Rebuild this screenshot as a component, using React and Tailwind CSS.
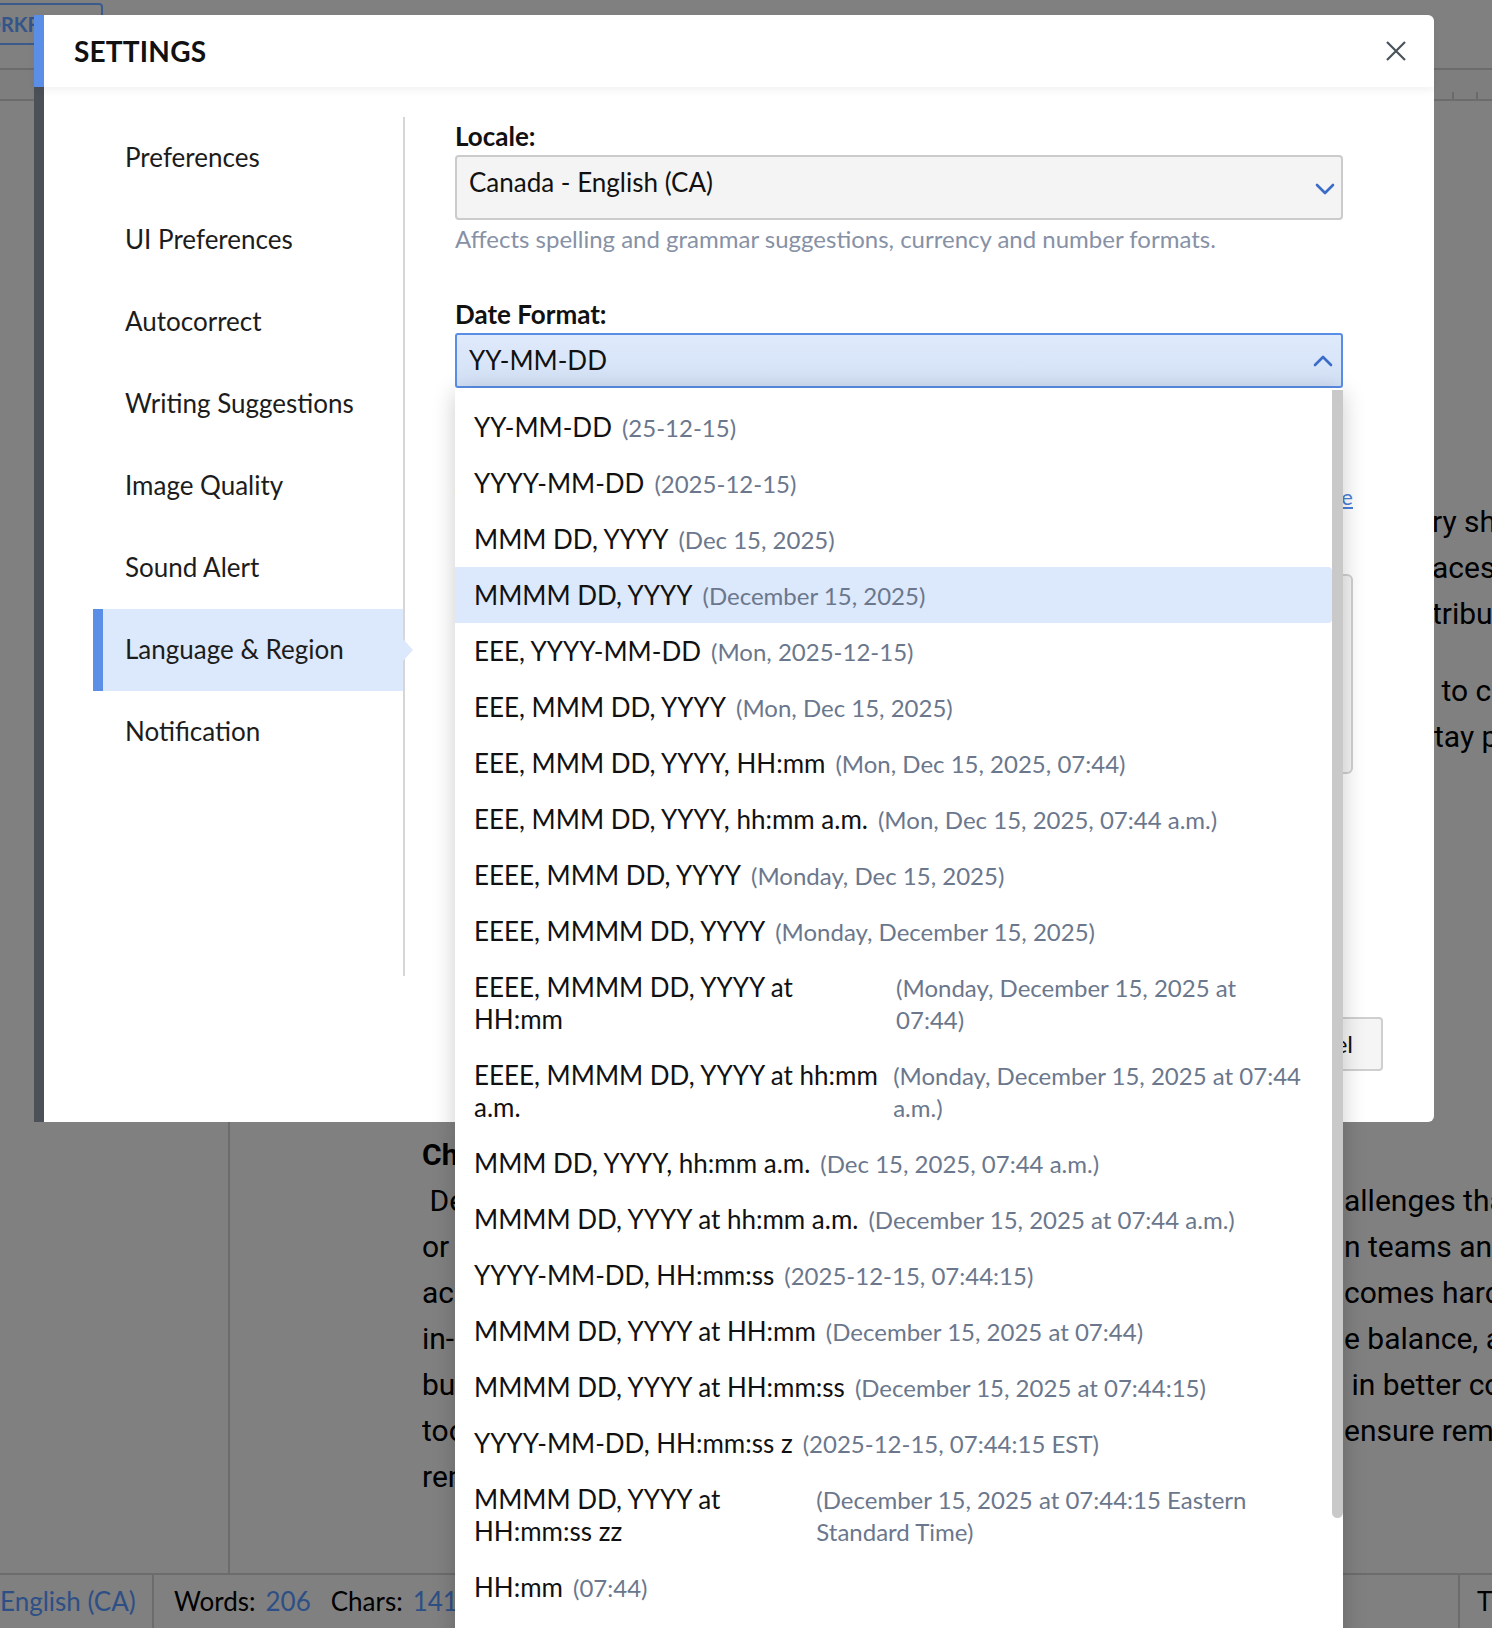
const navItems = [
  "Preferences",
  "UI Preferences",
  "Autocorrect",
  "Writing Suggestions",
  "Image Quality",
  "Sound Alert",
  "Language & Region",
  "Notification",
];

const formats = [
  ["YY-MM-DD", "(25-12-15)"],
  ["YYYY-MM-DD", "(2025-12-15)"],
  ["MMM DD, YYYY", "(Dec 15, 2025)"],
  ["MMMM DD, YYYY", "(December 15, 2025)"],
  ["EEE, YYYY-MM-DD", "(Mon, 2025-12-15)"],
  ["EEE, MMM DD, YYYY", "(Mon, Dec 15, 2025)"],
  ["EEE, MMM DD, YYYY, HH:mm", "(Mon, Dec 15, 2025, 07:44)"],
  ["EEE, MMM DD, YYYY, hh:mm a.m.", "(Mon, Dec 15, 2025, 07:44 a.m.)"],
  ["EEEE, MMM DD, YYYY", "(Monday, Dec 15, 2025)"],
  ["EEEE, MMMM DD, YYYY", "(Monday, December 15, 2025)"],
  ["EEEE, MMMM DD, YYYY at HH:mm", "(Monday, December 15, 2025 at 07:44)"],
  ["EEEE, MMMM DD, YYYY at hh:mm a.m.", "(Monday, December 15, 2025 at 07:44 a.m.)"],
  ["MMM DD, YYYY, hh:mm a.m.", "(Dec 15, 2025, 07:44 a.m.)"],
  ["MMMM DD, YYYY at hh:mm a.m.", "(December 15, 2025 at 07:44 a.m.)"],
  ["YYYY-MM-DD, HH:mm:ss", "(2025-12-15, 07:44:15)"],
  ["MMMM DD, YYYY at HH:mm", "(December 15, 2025 at 07:44)"],
  ["MMMM DD, YYYY at HH:mm:ss", "(December 15, 2025 at 07:44:15)"],
  ["YYYY-MM-DD, HH:mm:ss z", "(2025-12-15, 07:44:15 EST)"],
  ["MMMM DD, YYYY at HH:mm:ss zz", "(December 15, 2025 at 07:44:15 Eastern Standard Time)"],
  ["HH:mm", "(07:44)"],
  ["hh:mm a.m.", "(07:44 a.m.)"],
];

// document lines behind the dialog: [hidden start, visible tail]
const topLines = [
  ["A flexible remote work policy gives people the freedom to choose where they do their best work, and for many it is a necessa", "ry shift"],
  ["in how modern companies operate. Offices are no longer the only places where work happens, and shared online sp", "aces"],
  ["have become the main way colleagues meet, plan and con", "tribute"],
];
const midLines = [
  ["Leaders who want remote work to succeed need a plan. They have", " to clearly"],
  ["define goals, expectations and the tools that help everyone s", "tay productive"],
];
const lowLines = [
  [" Despite its many benefits, remote work introduces several ch", "allenges that"],
  ["or ganizations need to address early. Communication between", "n teams and"],
  ["across time zones can slow down, and collaboration be", "comes harder"],
  ["in-person contact is missing. Staff may struggle to keep a healthy lif", "e balance, and"],
  ["but clear policies and the right digital tools can result", " in better collaboration"],
  ["tools and regular check-ins help managers keep teams aligned and ", "ensure remote"],
  ["remain engaged and productive."],
];

function Chevron({ up }) {
  return (
    <svg width="20" height="12" viewBox="0 0 20 12" fill="none" className={up ? "rotate-180" : ""}>
      <path d="M2 2l8 8 8-8" stroke="#3a6cc8" strokeWidth="2.6" strokeLinecap="round" strokeLinejoin="round" />
    </svg>
  );
}

function DocLine({ parts, width }) {
  return (
    <div className="flex whitespace-nowrap">
      <span className="shrink-0 overflow-hidden whitespace-pre" style={{ width }}>
        {parts[0]}
      </span>
      {parts[1] && <span className="whitespace-pre">{parts[1]}</span>}
    </div>
  );
}

function Editor() {
  return (
    <div className="flex h-full flex-col">
      <div className="h-[68px] shrink-0 pt-[3px]">
        <div className="-ml-[48px] inline-flex h-[42px] items-center rounded-t-[4px] border-2 border-[#3b5b8c] pl-[10px] pr-[15px] text-[20px] font-bold text-[#34558a]">
          WORKFLOW
        </div>
      </div>
      <div className="relative h-[33px] shrink-0 border-y-2 border-[#6c6c6c] bg-[#7e7e7e]">
        <svg className="absolute left-0 top-0" width="1492" height="29" viewBox="0 0 1492 29">
          {Array.from({ length: 44 }).map((_, i) => {
            const x = 445 + i * 24;
            const tall = i % 4 === 1;
            return <line key={i} x1={x} x2={x} y1={tall ? 16 : 22} y2="29" stroke="#6a6a6a" strokeWidth="2" />;
          })}
        </svg>
      </div>
      <div className="flex min-h-0 flex-1">
        <div className="w-[230px] shrink-0 border-r-2 border-[#6c6c6c]" />
        <div className="min-w-0 flex-1 overflow-hidden pl-[192px] pt-[398px] font-['Roboto',sans-serif] text-[30px] leading-[46px] text-black">
          <div>
            {topLines.map((l, i) => (
              <DocLine key={i} parts={l} width={1010} />
            ))}
          </div>
          <div className="mt-[31px]">
            {midLines.map((l, i) => (
              <DocLine key={i} parts={l} width={1012} />
            ))}
          </div>
          <div className="mt-[372px] font-bold whitespace-nowrap">Challenges of Remote Work</div>
          <div>
            {lowLines.map((l, i) => (
              <DocLine key={i} parts={l} width={922} />
            ))}
          </div>
        </div>
      </div>
      <div className="flex h-[55px] shrink-0 items-center border-t-2 border-[#6c6c6c] text-[26px]">
        <div className="flex h-full w-[154px] shrink-0 items-center border-r-2 border-[#6c6c6c] text-[#2d4f86]">
          English (CA)
        </div>
        <div className="flex flex-1 items-center pl-[20px] text-black">
          <span>Words:</span>
          <span className="ml-[10px] text-[#2d4f86]">206</span>
          <span className="ml-[20px]">Chars:</span>
          <span className="ml-[10px] text-[#2d4f86]">1413</span>
        </div>
        <div className="flex h-full w-[34px] shrink-0 items-center overflow-hidden border-l-2 border-[#6c6c6c] pl-[17px] text-black">
          T
        </div>
      </div>
    </div>
  );
}

function DateDropdown() {
  return (
    <div className="absolute left-0 top-full z-20 flex h-[1300px] w-[888px] bg-white shadow-[0_4px_22px_rgba(0,0,0,0.2)]">
      <ul className="min-w-0 flex-1 pt-[11px]">
        {formats.map(([fmt, ex], i) => (
          <li
            key={fmt}
            className={
              "flex items-start gap-[10px] py-[12px] pl-[19px] pr-[24px] leading-[32px] " +
              (i === 3 ? "rounded-r-[4px] bg-[#dce8fb]" : "")
            }
          >
            <span className="text-[26px] text-[#111]">{fmt}</span>
            <span className="relative top-[1px] text-[24px] text-[#6b778c]">{ex}</span>
          </li>
        ))}
      </ul>
      <div className="mt-[2px] h-[1128px] w-[11px] shrink-0 rounded-b-[6px] bg-[#c9c9c9]" />
    </div>
  );
}

function Settings() {
  return (
    <div className="absolute left-[34px] top-[15px] flex h-[1107px] w-[1400px] flex-col">
      <div className="relative z-10 flex h-[72px] shrink-0 shadow-[0_3px_8px_rgba(0,0,0,0.06)]">
        <div className="w-[10px] bg-[#5b8ee6]" />
        <div className="flex flex-1 items-center justify-between rounded-tr-[6px] bg-white pl-[30px] pr-[27px]">
          <h1 className="text-[28px] font-bold tracking-[0.2px] text-[#111]">SETTINGS</h1>
          <svg width="22" height="22" viewBox="0 0 22 22" fill="none">
            <path d="M2 2l18 18M20 2L2 20" stroke="#4a525b" strokeWidth="2.2" />
          </svg>
        </div>
      </div>
      <div className="flex flex-1">
        <div className="w-[10px] bg-[#4b5157]" />
        <div className="flex flex-1 flex-col rounded-br-[6px] bg-white pl-[49px] pt-[30px]">
          <div className="flex">
            <nav className="h-[859px] w-[312px] shrink-0 border-r-2 border-[#d6d6d6]">
              {navItems.map((item) => {
                const active = item === "Language & Region";
                return (
                  <div
                    key={item}
                    className={
                      "relative flex h-[82px] items-center pb-[2px] text-[26px] text-[#1c1c1c] " +
                      (active ? "border-l-[10px] border-[#5b8ee6] bg-[#dce8fb] pl-[22px]" : "pl-[32px]")
                    }
                  >
                    {item}
                    {active && (
                      <span className="absolute left-full top-1/2 -translate-y-1/2 border-y-[11px] border-l-[10px] border-y-transparent border-l-[#dce8fb]" />
                    )}
                  </div>
                );
              })}
            </nav>
            <div className="ml-[50px] w-[898px]">
              <label className="block text-[26px] font-bold leading-[38px] text-[#111]">Locale:</label>
              <div className="flex h-[65px] w-[888px] items-center justify-between rounded-[4px] border-2 border-[#cbcbcb] bg-[#f4f4f4] pb-[11px] pl-[12px] pr-[6px]">
                <span className="text-[26px] text-[#111]">Canada - English (CA)</span>
                <span className="mt-[13px]">
                  <Chevron />
                </span>
              </div>
              <p className="mt-[3px] text-[24px] leading-[32px] text-[#8791a6]">
                Affects spelling and grammar suggestions, currency and number formats.
              </p>
              <label className="mt-[40px] block text-[26px] font-bold leading-[38px] text-[#111]">Date Format:</label>
              <div className="relative w-[888px]">
                <div className="flex h-[55px] items-center justify-between rounded-[3px] border-2 border-[#5a8ee6] bg-linear-to-b from-[#dfeafb] to-[#d3e1f6] pl-[12px] pr-[8px]">
                  <span className="text-[26px] text-[#111]">YY-MM-DD</span>
                  <Chevron up />
                </div>
                <DateDropdown />
              </div>
              <div className="mt-[92px] flex justify-between text-[22px]">
                <span className="text-[#333]">Time zone: Eastern Standard Time</span>
                <span className="text-[#4a7fd8] underline">Change time zone</span>
              </div>
              <div className="mt-[61px] h-[200px] rounded-[6px] border-2 border-[#d0d0d0] bg-[#f4f4f4]" />
            </div>
          </div>
          <div className="mt-[41px] flex justify-end gap-[16px] pr-[51px]">
            <button className="h-[54px] rounded-[4px] bg-[#5b8ee6] px-[30px] text-[24px] text-white">Save</button>
            <button className="h-[54px] rounded-[4px] border-2 border-[#cfcfcf] bg-[#f5f5f5] px-[28px] text-[24px] text-[#111]">
              Cancel
            </button>
          </div>
        </div>
      </div>
    </div>
  );
}

export default function App() {
  return (
    <div className="relative h-[1628px] w-[1492px] overflow-hidden bg-[#808080] font-['Lato',sans-serif]">
      <Editor />
      <Settings />
    </div>
  );
}
